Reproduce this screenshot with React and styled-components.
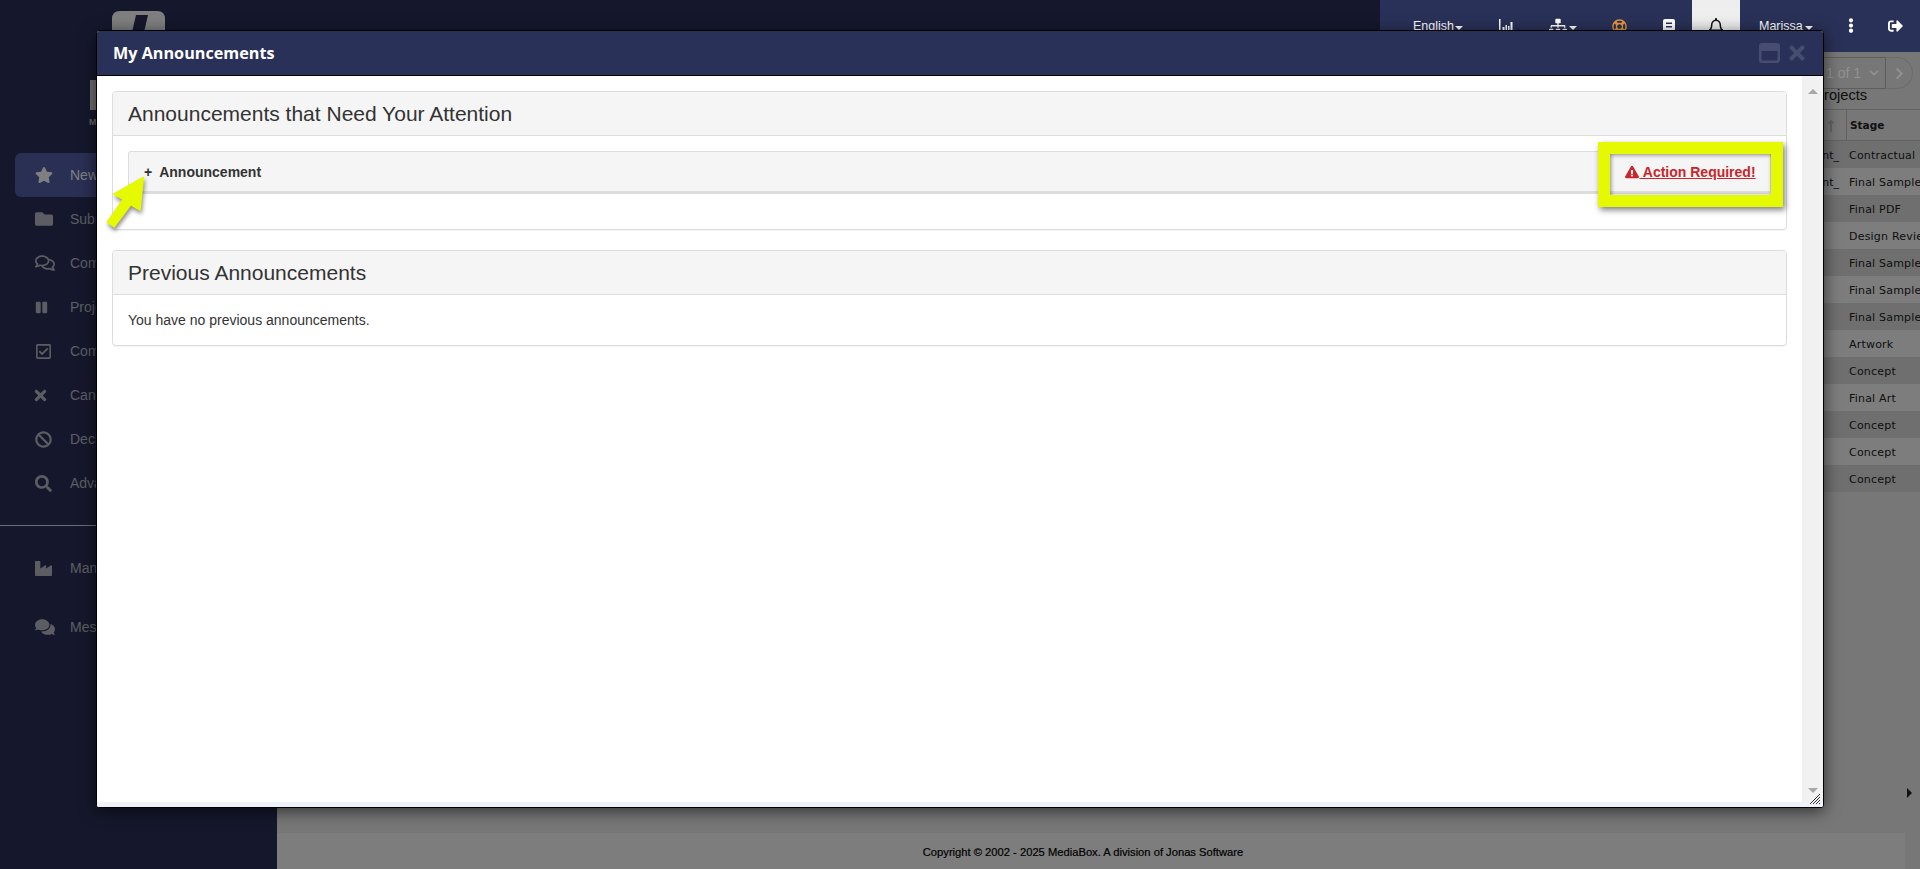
import React from "react";
import styled, { createGlobalStyle } from "styled-components";
import {
	FaStar,
	FaFolder,
	FaRegComments,
	FaPause,
	FaRegCheckSquare,
	FaTimes,
	FaBan,
	FaSearch,
	FaIndustry,
	FaComments,
	FaSitemap,
	FaRegLifeRing,
	FaRegBell,
	FaEllipsisV,
	FaSignOutAlt,
	FaExclamationTriangle,
	FaChevronDown,
	FaChevronRight,
	FaLongArrowAltUp
} from "react-icons/fa";

const navItems = [
	{ label: "New Projects", icon: FaStar, size: 18, active: true },
	{ label: "Submitted", icon: FaFolder, size: 18 },
	{ label: "Comments", icon: FaRegComments, size: 20 },
	{ label: "Projects on Hold", icon: FaPause, size: 13 },
	{ label: "Completed", icon: FaRegCheckSquare, size: 17 },
	{ label: "Cancelled", icon: FaTimes, size: 17, shift: -3 },
	{ label: "Declined", icon: FaBan, size: 17 },
	{ label: "Advanced Search", icon: FaSearch, size: 17 }
];

const rows = [
	["nt_", "Contractual"],
	["nt_", "Final Sample"],
	["", "Final PDF"],
	["", "Design Review"],
	["", "Final Sample"],
	["", "Final Sample"],
	["", "Final Sample"],
	["", "Artwork"],
	["", "Concept"],
	["", "Final Art"],
	["", "Concept"],
	["", "Concept"],
	["", "Concept"]
];

const GlobalStyle = createGlobalStyle`
	html, body {
		margin: 0;
		padding: 0;
		height: 100%;
		overflow: hidden;
		font-family: "Liberation Sans", Arial, sans-serif;
	}
	* {
		box-sizing: border-box;
	}
`;

const Page = styled.div`
	position: relative;
	width: 1920px;
	height: 869px;
	overflow: hidden;
	display: grid;
	grid-template-columns: 277px 1fr;
	grid-template-rows: 869px;
	background: #eee;
`;

const Scrim = styled.div`
	position: absolute;
	inset: 0;
	z-index: 10;
	background: rgba(0, 0, 0, 0.5);
`;

const Sidebar = styled.aside`
	background: #2a3158;
	display: flex;
	flex-direction: column;
`;

const Logo = styled.div`
	height: 153px;
	padding: 11px 0 0 112px;
	display: flex;
	flex-direction: column;
`;

const LogoMark = styled.svg`
	width: 53px;
	height: 30px;
	flex: none;
`;

const LogoBar = styled.div`
	width: 8px;
	height: 30px;
	flex: none;
	margin: 39px 0 0 -22px;
	background: #ddd;
`;

const LogoText = styled.div`
	margin: 7px 0 0 -23px;
	font-size: 9px;
	line-height: 10px;
	font-weight: 700;
	color: #ccc;
`;

const Nav = styled.nav`
	display: flex;
	flex-direction: column;
	padding: 0 0 20px 15px;
`;

const NavItem = styled.div`
	height: 44px;
	display: flex;
	align-items: center;
	padding-left: 20px;
	border-radius: 6px;
	font-size: 14px;
	background: ${({ active }) => (active ? "#545ea8" : "transparent")};
	color: ${({ active }) => (active ? "#ffffff" : "#b8bac6")};
`;

const NavIcon = styled.span`
	width: 35px;
	flex: none;
	display: flex;
	align-items: center;
	& svg {
		margin-left: ${({ shift }) => shift || 0}px;
	}
`;

const Divider = styled.hr`
	margin: 0;
	border: 0;
	border-top: 1px solid #ddd;
`;

const BottomNav = styled.div`
	display: flex;
	flex-direction: column;
	gap: 15px;
	padding: 20px 0 0 15px;
`;

const Main = styled.main`
	display: flex;
	flex-direction: column;
	min-width: 0;
	min-height: 0;
`;

const TopStrip = styled.header`
	height: 52px;
	flex: none;
	background: #2a3158;
	display: flex;
	justify-content: flex-end;
`;

const TopBar = styled.div`
	position: relative;
	z-index: 20;
	width: 540px;
	display: flex;
	align-items: flex-start;
	color: #fff;
	background: #2a3158;
`;

const TopItem = styled.div`
	width: ${({ w }) => w}px;
	margin-left: ${({ ml }) => ml}px;
	height: 52px;
	flex: none;
	display: flex;
	align-items: flex-start;
	justify-content: ${({ tile }) => (tile ? "center" : "space-between")};
	padding-top: ${({ top }) => top || 19}px;
	font-size: 12.5px;
	line-height: 15px;
	white-space: nowrap;
	color: ${({ color }) => color || "#fff"};
	background: ${({ tile }) => (tile ? "#eeeeee" : "transparent")};
`;

const Caret = styled.span`
	width: 0;
	height: 0;
	margin-top: ${({ low }) => (low ? 9 : 7)}px;
	border-left: 4px solid transparent;
	border-right: 4px solid transparent;
	border-top: 4px solid #fff;
`;

const Content = styled.div`
	flex: 1;
	display: flex;
	flex-direction: column;
	align-items: flex-end;
	min-height: 0;
`;

const Pager = styled.div`
	position: relative;
	z-index: 11;
	display: flex;
	align-items: center;
	height: 32px;
	flex: none;
	margin: 5px 7px 0 0;
	font-size: 14px;
	color: #929292;
`;

const PagerBox = styled.div`
	width: 90px;
	height: 32px;
	display: flex;
	align-items: center;
	justify-content: flex-end;
	gap: 8px;
	padding-right: 6px;
	border: 1px solid #5e5e5e;
	border-radius: 3px 0 0 3px;
`;

const PagerNext = styled.div`
	width: 27px;
	height: 32px;
	display: flex;
	align-items: center;
	justify-content: center;
	border: 1px solid #6c6c6c;
	border-left: 0;
	border-radius: 0 16px 16px 0;
`;

const Caption = styled.div`
	align-self: stretch;
	height: 20px;
	flex: none;
	margin-top: -3px;
	padding-left: 1539px;
	font-size: 14.6px;
	line-height: 18px;
	color: #222;
	white-space: nowrap;
`;

const Table = styled.div`
	align-self: stretch;
	flex: none;
	margin-top: 3px;
`;

const HeadRow = styled.div`
	display: grid;
	grid-template-columns: 1fr 73px;
	height: 32px;
	border-top: 1px solid #c4c4c4;
	border-bottom: 1px solid #c4c4c4;
	background: #eee;
`;

const Row = styled.div`
	display: grid;
	grid-template-columns: 1fr 73px;
	height: 27px;
	background: ${({ odd }) => (odd ? "#fafafa" : "#dedede")};
`;

const Cell = styled.div`
	padding: 1px 8px 0 0;
	display: flex;
	align-items: center;
	justify-content: flex-end;
	font-family: "DejaVu Sans", sans-serif;
	font-size: 11px;
	border-right: ${({ head }) => (head ? "1px solid #c4c4c4" : "0")};
	color: ${({ head }) => (head ? "#c4c4c4" : "#222")};
`;

const StageCell = styled.div`
	padding: ${({ head }) => (head ? "0 0 0 3px" : "1px 0 0 2px")};
	display: flex;
	align-items: center;
	font-family: "DejaVu Sans", sans-serif;
	font-size: ${({ head }) => (head ? 10.5 : 11)}px;
	font-weight: ${({ head }) => (head ? 700 : 400)};
	letter-spacing: ${({ head }) => (head ? 0 : 0.2)}px;
	color: #222;
	white-space: nowrap;
	overflow: hidden;
`;

const ScrollMark = styled.div`
	width: 0;
	height: 0;
	flex: none;
	margin: 296px 8px 0 0;
	border-top: 5px solid transparent;
	border-bottom: 5px solid transparent;
	border-left: 5px solid #222;
`;

const Footer = styled.footer`
	height: 36px;
	flex: none;
	margin-right: 15px;
	display: flex;
	align-items: center;
	justify-content: center;
	padding: 1px 16px 0 0;
	background: #fafafa;
	font-size: 11.2px;
	color: #000;
	-webkit-text-stroke: 0.2px #000;
`;

const Modal = styled.section`
	position: absolute;
	z-index: 30;
	left: 96px;
	top: 30px;
	width: 1728px;
	height: 778px;
	display: flex;
	flex-direction: column;
	background: #fff;
	border: 1px solid #000;
	border-radius: 3px;
	box-shadow: 0 3px 16px rgba(0, 0, 0, 0.6);
	overflow: hidden;
`;

const ModalHeader = styled.header`
	height: 45px;
	flex: none;
	display: flex;
	align-items: center;
	justify-content: space-between;
	padding: 0 15px 0 16px;
	background: #2a3158;
	border-bottom: 1px solid #000;
`;

const ModalTitle = styled.h1`
	margin: 0;
	font-family: "Open Sans", sans-serif;
	font-size: 16.2px;
	font-weight: 700;
	color: #fff;
`;

const ModalControls = styled.div`
	display: flex;
	align-items: center;
	gap: 6px;
	color: #474d70;
`;

const ModalBody = styled.div`
	flex: 1;
	min-height: 0;
	display: grid;
	grid-template-columns: 1fr 21px;
`;

const ModalContent = styled.div`
	padding: 15px 15px 0;
	display: flex;
	flex-direction: column;
	gap: 20px;
`;

const ScrollTrack = styled.div`
	background: #f1f1f1;
	display: flex;
	flex-direction: column;
	align-items: center;
	justify-content: space-between;
	padding: 13px 0 9px;
`;

const ScrollArrow = styled.span`
	width: 0;
	height: 0;
	border-left: 5px solid transparent;
	border-right: 5px solid transparent;
	border-${({ up }) => (up ? "bottom" : "top")}: 5px solid #a8a8a8;
`;

const ModalFoot = styled.div`
	height: 5px;
	flex: none;
	background: #eef3fb;
`;

const Grip = styled.svg`
	position: absolute;
	right: 3px;
	bottom: 3px;
	width: 10px;
	height: 10px;
`;

const Panel = styled.div`
	border: 1px solid #ddd;
	border-radius: 4px;
	box-shadow: 0 1px 1px rgba(0, 0, 0, 0.05);
	background: #fff;
`;

const PanelHeading = styled.h2`
	height: 44px;
	margin: 0;
	padding: 1px 15px 0;
	display: flex;
	align-items: center;
	font-size: 21px;
	font-weight: 400;
	color: #333;
	background: #f5f5f5;
	border-bottom: 1px solid #ddd;
	border-radius: 3px 3px 0 0;
`;

const PanelBody = styled.div`
	padding: ${({ tall }) => (tall ? "15px 15px 35px" : "15px")};
	font-size: 14px;
	line-height: 20px;
	color: #333;
`;

const Accordion = styled.div`
	position: relative;
	height: 43px;
	display: flex;
	align-items: center;
	padding-left: 15px;
	font-size: 14px;
	font-weight: 700;
	color: #333;
	background: #f5f5f5;
	border: 1px solid #ddd;
	border-bottom-width: 3px;
	border-radius: 3px;
`;

const PlusSign = styled.span`
	margin-right: 7px;
`;

const ActionHighlight = styled.div`
	position: absolute;
	right: -13px;
	top: -10px;
	width: 185px;
	height: 65px;
	display: flex;
	align-items: center;
	justify-content: center;
	padding-bottom: 5px;
	border: 12px solid #e5f900;
	box-shadow: 2px 3px 6px rgba(0, 0, 0, 0.5), inset 1px 1px 4px rgba(0, 0, 0, 0.45);
`;

const ActionLink = styled.a`
	font-size: 14px;
	font-weight: 700;
	white-space: nowrap;
	color: #c9252b;
	text-decoration: underline;
	& svg {
		width: 14px;
		height: 14px;
		vertical-align: -2px;
	}
`;

const Arrow = styled.svg`
	position: absolute;
	left: -24px;
	top: 20px;
	width: 44px;
	height: 60px;
	overflow: visible;
	filter: drop-shadow(1px 3px 2px rgba(0, 0, 0, 0.45));
`;

const ChartIcon = () => (
	<svg width="14" height="16" viewBox="0 0 14 16">
		<path d="M0 0H1.500V16H0ZM3.500 8H5.500V14H3.500ZM6.500 6H8V14H6.500ZM9 7H10.500V14H9ZM11.500 3H13.500V14H11.500Z" fill="currentColor" />
	</svg>
);

const NoteIcon = () => (
	<svg width="12" height="16" viewBox="0 0 12 16">
		<path d="M2 0H10Q12 0 12 2V12Q12 13 11 13V16H2Q0 16 0 13V2Q0 0 2 0ZM3 3.500V5H9V3.500ZM3 7V8.500H9V7Z" fill="currentColor" fillRule="evenodd" />
	</svg>
);

const WindowIcon = () => (
	<svg width="21" height="20" viewBox="0 0 21 20">
		<path d="M3 0H18Q21 0 21 3V17Q21 20 18 20H3Q0 20 0 17V3Q0 0 3 0ZM2.500 8V16Q2.500 17.500 4 17.500H17Q18.500 17.500 18.500 16V8Z" fill="currentColor" fillRule="evenodd" />
	</svg>
);

const App = () => (
	<Page>
		<GlobalStyle />
		<Sidebar>
			<Logo>
				<LogoMark viewBox="0 0 53 30">
					<path d="M8 0H45Q53 0 53 8V30H0V8Q0 0 8 0Z" fill="#fff" />
					<path d="M24 4H36L30 30H18Z" fill="#2a3158" />
				</LogoMark>
				<LogoBar />
				<LogoText>MEDIA</LogoText>
			</Logo>
			<Nav>
				{navItems.map(({ label, icon: Icon, size, shift, active }) => (
					<NavItem key={label} active={active}>
						<NavIcon shift={shift}>
							<Icon size={size} />
						</NavIcon>
						{label}
					</NavItem>
				))}
			</Nav>
			<Divider />
			<BottomNav>
				<NavItem>
					<NavIcon>
						<FaIndustry size={17} />
					</NavIcon>
					Manufacturing
				</NavItem>
				<NavItem>
					<NavIcon>
						<FaComments size={20} />
					</NavIcon>
					Messages
				</NavItem>
			</BottomNav>
		</Sidebar>
		<Main>
			<TopStrip>
				<TopBar>
					<TopItem ml={33} w={50}>
						English
						<Caret />
					</TopItem>
					<TopItem ml={36} w={14}>
						<ChartIcon />
					</TopItem>
					<TopItem ml={36} w={28} top={17}>
						<FaSitemap size={18} />
						<Caret low />
					</TopItem>
					<TopItem ml={35} w={15} color="#e8963c">
						<FaRegLifeRing size={15} />
					</TopItem>
					<TopItem ml={36} w={12}>
						<NoteIcon />
					</TopItem>
					<TopItem ml={17} w={48} tile color="#111" top={18}>
						<FaRegBell size={16} />
					</TopItem>
					<TopItem ml={19} w={54}>
						Marissa
						<Caret />
					</TopItem>
					<TopItem ml={34} w={8} top={18}>
						<FaEllipsisV size={15} />
					</TopItem>
					<TopItem ml={33} w={15} top={18}>
						<FaSignOutAlt size={16} />
					</TopItem>
				</TopBar>
			</TopStrip>
			<Content>
				<Pager>
					<PagerBox>
						1 of 1
						<FaChevronDown size={10} />
					</PagerBox>
					<PagerNext>
						<FaChevronRight size={13} />
					</PagerNext>
				</Pager>
				<Caption>projects</Caption>
				<Table>
					<HeadRow>
						<Cell head>
							<FaLongArrowAltUp size={14} />
						</Cell>
						<StageCell head>Stage</StageCell>
					</HeadRow>
					{rows.map(([project, stage], i) => (
						<Row key={i} odd={i % 2 === 1}>
							<Cell>{project}</Cell>
							<StageCell>{stage}</StageCell>
						</Row>
					))}
				</Table>
				<ScrollMark />
			</Content>
			<Footer>Copyright © 2002 - 2025 MediaBox. A division of Jonas Software</Footer>
		</Main>
		<Scrim />
		<Modal>
			<ModalHeader>
				<ModalTitle>My Announcements</ModalTitle>
				<ModalControls>
					<WindowIcon />
					<FaTimes size={22} />
				</ModalControls>
			</ModalHeader>
			<ModalBody>
				<ModalContent>
					<Panel>
						<PanelHeading>Announcements that Need Your Attention</PanelHeading>
						<PanelBody tall>
							<Accordion>
								<PlusSign>+</PlusSign>
								<span>Announcement</span>
								<Arrow viewBox="0 0 44 60">
									<polygon
										points="38.3,5.3 9,22 18.3,27.300 2.500,50 9,55 25.700,32.700 35,38"
										fill="#e5f900"
										stroke="#e5f900"
										strokeWidth="1.5"
										strokeLinejoin="round"
									/>
								</Arrow>
								<ActionHighlight>
									<ActionLink>
										<FaExclamationTriangle /> Action Required!
									</ActionLink>
								</ActionHighlight>
							</Accordion>
						</PanelBody>
					</Panel>
					<Panel>
						<PanelHeading>Previous Announcements</PanelHeading>
						<PanelBody>You have no previous announcements.</PanelBody>
					</Panel>
				</ModalContent>
				<ScrollTrack>
					<ScrollArrow up />
					<ScrollArrow />
				</ScrollTrack>
			</ModalBody>
			<ModalFoot />
			<Grip viewBox="0 0 10 10">
				<path d="M0 10L10 0M3 10L10 3M6 10L10 6M9 10L10 9" stroke="#333" strokeWidth="1" />
			</Grip>
		</Modal>
	</Page>
);

export default App;
